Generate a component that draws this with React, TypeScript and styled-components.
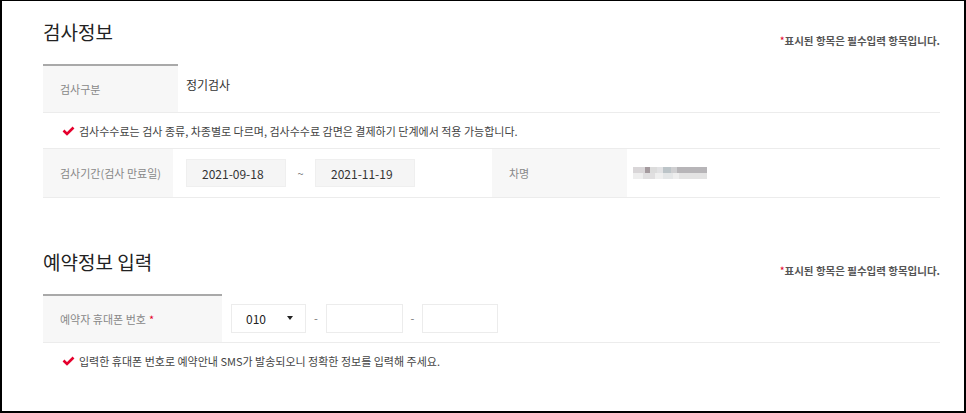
import React from "react";
import styled, { createGlobalStyle } from "styled-components";

const Global = createGlobalStyle`
  html, body { margin: 0; padding: 0; background: #fff; }
  body { font-family: "Noto Sans CJK KR", "Noto Sans", sans-serif; color: #333; }
  * { box-sizing: border-box; }
`;

const Frame = styled.div`
  width: 966px;
  height: 413px;
  border-style: solid;
  border-color: #000;
  border-width: 1px 2px 2px 2px;
  padding: 17px 24px 0 41px;
  overflow: hidden;
`;

const Section = styled.section<{ $gap?: number }>`
  margin-top: ${(p) => p.$gap ?? 0}px;
`;

const Header = styled.div`
  display: flex;
  align-items: flex-end;
  justify-content: space-between;
  height: 28px;
`;

const Title = styled.h2`
  margin: 0;
  font-size: 19px;
  line-height: 28px;
  font-weight: 400;
  color: #222;
`;

const Required = styled.p`
  margin: 0 0 -2px 0;
  font-size: 10.5px;
  line-height: 14px;
  font-weight: 700;
  color: #555;
  span { color: #e4002b; font-weight: 400; }
`;

const Row = styled.div<{ $cols: string; $topLine?: boolean }>`
  display: grid;
  grid-template-columns: ${(p) => p.$cols};
  height: ${(p) => (p.$topLine ? 50 : 49)}px;
  border-bottom: 1px solid #ececec;
  border-top: ${(p) => (p.$topLine ? "1px solid #ececec" : "none")};
`;

const LabelCell = styled.div<{ $accent?: boolean }>`
  display: flex;
  align-items: center;
  padding-left: 17px;
  background: #f7f7f7;
  border-top: ${(p) => (p.$accent ? "2px solid #a9a9a9" : "none")};
  font-size: 11px;
  color: #888;
  white-space: nowrap;
  em { font-style: normal; color: #e4002b; margin-left: 3px; }
`;

const ValueCell = styled.div<{ $pad?: number; $top?: boolean }>`
  display: flex;
  align-items: ${(p) => (p.$top ? "flex-start" : "center")};
  padding-left: ${(p) => p.$pad ?? 8}px;
  padding-top: ${(p) => (p.$top ? 12 : 0)}px;
  font-size: 12px;
  color: #333;
`;

const DateBox = styled.div`
  width: 100px;
  height: 28px;
  display: flex;
  align-items: center;
  padding-left: 15px;
  background: #f5f5f5;
  border: 1px solid #efefef;
  font-size: 12px;
  color: #333;
`;

const Sep = styled.span<{ $w: number }>`
  width: ${(p) => p.$w}px;
  text-align: center;
  font-size: 11px;
  color: #777;
`;

const SelectBox = styled.div`
  width: 75px;
  height: 29px;
  display: flex;
  align-items: center;
  justify-content: space-between;
  padding: 0 12px 0 14px;
  border: 1px solid #ececec;
  background: #fff;
  font-size: 12px;
  color: #222;
`;

const Arrow = styled.i`
  width: 0;
  height: 0;
  border-left: 3.5px solid transparent;
  border-right: 3.5px solid transparent;
  border-top: 4px solid #222;
`;

const TextInput = styled.div<{ $w: number }>`
  width: ${(p) => p.$w}px;
  height: 29px;
  border: 1px solid #ececec;
  background: #fff;
`;

const Note = styled.div`
  display: flex;
  align-items: center;
  height: 35px;
  padding-left: 19px;
  font-size: 11px;
  color: #444;
  gap: 4px;
  svg { flex: none; }
`;

const Mosaic = styled.div`
  width: 74px;
  height: 12px;
  background:
    linear-gradient(90deg, #d9d6d8 0 12px, #a49a9e 12px 17px, #dcdcdc 17px 24px, #e2e2e4 24px 30px, #bcc4c8 30px 38px, #cfcfd1 38px 44px, #b7b5b8 44px 74px) top / 74px 6px no-repeat,
    linear-gradient(90deg, #eeeeee 0 10px, #e0dfe0 10px 22px, #efefef 22px 30px, #e4e6e7 30px 40px, #eeeeee 40px 46px, #e3e3e3 46px 74px) bottom / 74px 6px no-repeat;
`;

const Check = () => (
  <svg width="13" height="10" viewBox="0 0 13 10">
    <path d="M1.5 4.5 L5 8 L11.5 1.5" fill="none" stroke="#e5002d" strokeWidth="2.6" />
  </svg>
);

export default function App() {
  return (
    <>
      <Global />
      <Frame>
        <Section>
          <Header>
            <Title>검사정보</Title>
            <Required>
              <span>*</span>표시된 항목은 필수입력 항목입니다.
            </Required>
          </Header>
          <Section $gap={18}>
            <Row $cols="135px 1fr">
              <LabelCell $accent>검사구분</LabelCell>
              <ValueCell $top>정기검사</ValueCell>
            </Row>
            <Note>
              <Check />
              검사수수료는 검사 종류, 차종별로 다르며, 검사수수료 감면은 결제하기 단계에서 적용 가능합니다.
            </Note>
            <Row $cols="130px 319px 135px 1fr" $topLine>
              <LabelCell>검사기간(검사 만료일)</LabelCell>
              <ValueCell $pad={13}>
                <DateBox>2021-09-18</DateBox>
                <Sep $w={29}>~</Sep>
                <DateBox>2021-11-19</DateBox>
              </ValueCell>
              <LabelCell>차명</LabelCell>
              <ValueCell $pad={6}>
                <Mosaic />
              </ValueCell>
            </Row>
          </Section>
        </Section>
        <Section $gap={50}>
          <Header>
            <Title>예약정보 입력</Title>
            <Required>
              <span>*</span>표시된 항목은 필수입력 항목입니다.
            </Required>
          </Header>
          <Section $gap={18}>
            <Row $cols="179px 1fr">
              <LabelCell $accent>
                예약자 휴대폰 번호<em>*</em>
              </LabelCell>
              <ValueCell $pad={9}>
                <SelectBox>
                  010
                  <Arrow />
                </SelectBox>
                <Sep $w={20}>-</Sep>
                <TextInput $w={77} />
                <Sep $w={19}>-</Sep>
                <TextInput $w={76} />
              </ValueCell>
            </Row>
            <Note>
              <Check />
              입력한 휴대폰 번호로 예약안내 SMS가 발송되오니 정확한 정보를 입력해 주세요.
            </Note>
          </Section>
        </Section>
      </Frame>
    </>
  );
}
